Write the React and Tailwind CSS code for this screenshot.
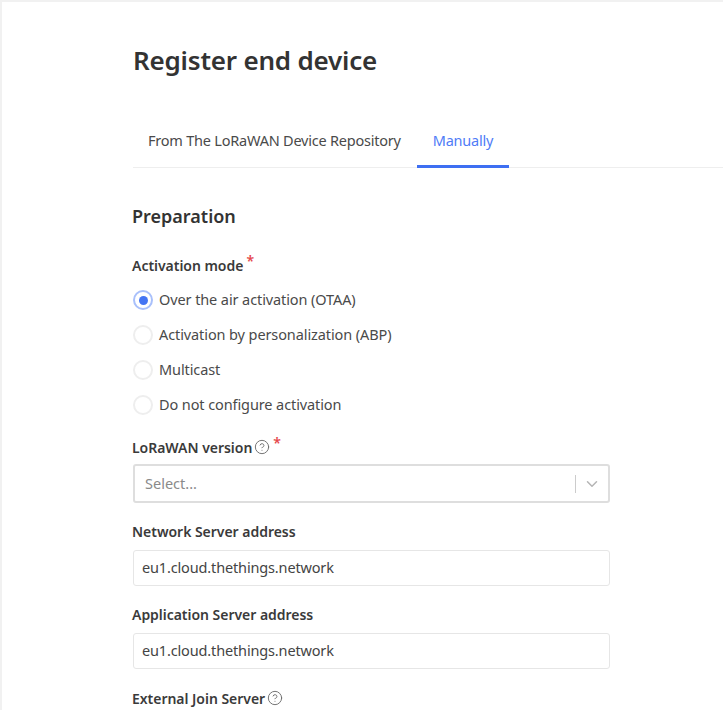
import { HelpCircle, ChevronDown } from "lucide-react";

const modes = [
  "Over the air activation (OTAA)",
  "Activation by personalization (ABP)",
  "Multicast",
  "Do not configure activation",
];

function Hint() {
  return <HelpCircle size={16} strokeWidth={1.4} className="text-[#6b6b6b] ml-[2px]" />;
}

function Required() {
  return <span className="text-[#e5484d] text-[14px] leading-none ml-[3px] -mt-[8px]">*</span>;
}

function FieldLabel({ children, className }) {
  return (
    <div className={`flex items-center h-[20px] -ml-px text-[14px] font-semibold text-[#3a3a3a] tracking-[-0.03px] ${className}`}>
      {children}
    </div>
  );
}

function TextField({ value }) {
  return (
    <div className="w-[477px] h-[36px] flex items-center px-[8px] mt-[9px] border border-[#e6e6e6] rounded-[3px] text-[14.5px] text-[#444444] tracking-[-0.15px]">
      {value}
    </div>
  );
}

function App() {
  return (
    <div className="w-[723px] h-[710px] overflow-hidden bg-white border-t-2 border-l-2 border-[#f1f1f1] font-['Noto_Sans',sans-serif]">
      <div className="pl-[131px]">
        <h1 className="pt-[40px] h-[73px] text-[26px] leading-[36px] font-semibold text-[#333333] tracking-[-0.2px]">
          Register end device
        </h1>

        {/* Tabs */}
        <div className="flex mt-[40px] h-[53px] border-b border-[#eeeeee]">
          <div className="h-[52px] pl-[15px] pr-[16px] pt-[15px] text-[14.5px] text-[#4a4a4a] tracking-[-0.22px]">
            From The LoRaWAN Device Repository
          </div>
          <div className="h-[53px] px-[16px] pt-[15px] text-[14.5px] text-[#4f7cf7] tracking-[-0.22px] border-b-[3px] border-[#3e6ff2]">
            Manually
          </div>
        </div>

        <h2 className="mt-[35px] -ml-px text-[18px] leading-[26px] font-semibold text-[#333333]">Preparation</h2>

        <FieldLabel className="mt-[26px]">
          Activation mode
          <Required />
        </FieldLabel>

        <div className="mt-[15px] flex flex-col gap-[15px]">
          {modes.map((mode, i) => (
            <label key={mode} className="flex items-center h-[20px] text-[14.5px] text-[#4a4a4a] tracking-[-0.1px]">
              {i === 0 ? (
                <span className="w-[20px] h-[20px] mr-[6px] rounded-full border-2 border-[#a9c0fb] flex items-center justify-center">
                  <span className="w-[9px] h-[9px] rounded-full bg-[#4475f3]" />
                </span>
              ) : (
                <span className="w-[20px] h-[20px] mr-[6px] rounded-full border-2 border-[#eeeeee]" />
              )}
              {mode}
            </label>
          ))}
        </div>

        <FieldLabel className="mt-[22px]">
          LoRaWAN version
          <Hint />
          <Required />
        </FieldLabel>

        <div className="w-[477px] h-[39px] mt-[7px] flex items-center pl-[10px] border-2 border-[#dedede] rounded-[3px] text-[14.5px] text-[#8a8a8a]">
          <span className="flex-1">Select...</span>
          <span className="w-[1px] h-[18px] bg-[#cccccc]" />
          <ChevronDown size={18} strokeWidth={2} className="text-[#b5b5b5] mx-[7px]" />
        </div>

        <FieldLabel className="mt-[18px]">Network Server address</FieldLabel>
        <TextField value="eu1.cloud.thethings.network" />

        <FieldLabel className="mt-[18px]">Application Server address</FieldLabel>
        <TextField value="eu1.cloud.thethings.network" />

        <FieldLabel className="mt-[19px]">
          External Join Server
          <Hint />
        </FieldLabel>
      </div>
    </div>
  );
}

export default App;
